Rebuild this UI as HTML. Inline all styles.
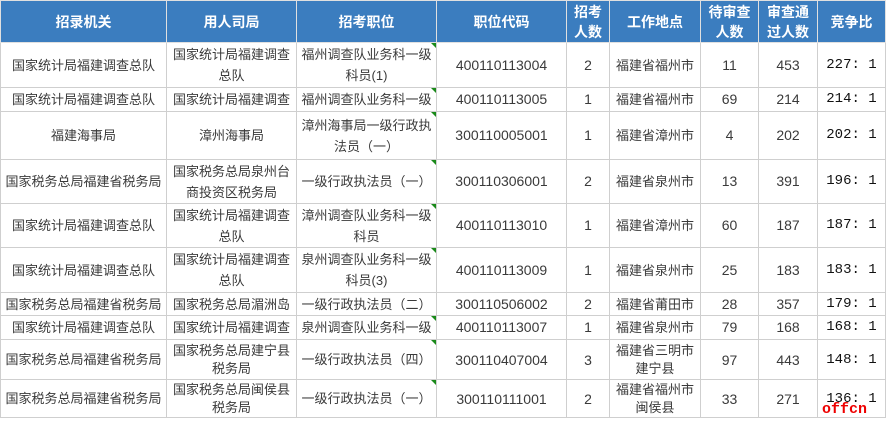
<!DOCTYPE html>
<html><head><meta charset="utf-8"><style>
body{margin:0;width:888px;height:421px;background:#fff;overflow:hidden;position:relative;font-family:"Liberation Sans","Noto Sans CJK SC",sans-serif}
table{border-collapse:collapse;table-layout:fixed;position:absolute;left:0;top:0;width:885px}
td,th{border:1px solid #cfcfcf;text-align:center;font-size:13px;color:#3a3a3a;line-height:21px;padding:0 2px;position:relative;overflow:hidden}
th{background:#3b7dbf;color:#fff;font-weight:bold;font-size:14px;line-height:20px;height:41px;border-color:#e0e0e0}
td.n{font-size:14px}
td.r{font-family:"Liberation Mono",monospace;font-size:14px;color:#111;white-space:nowrap}
tr.s td{line-height:18px}
.t:after{content:"";position:absolute;right:0;top:0;border-top:5px solid #1a8a1a;border-left:5px solid transparent}
.wm{position:absolute;left:822px;top:401px;color:#e00;font:bold 15px "Liberation Mono",monospace}
</style></head><body>
<table>
<colgroup><col style="width:166px"><col style="width:130px"><col style="width:140px"><col style="width:130px"><col style="width:43px"><col style="width:91px"><col style="width:58px"><col style="width:59px"><col style="width:68px"></colgroup>
<tr><th>招录机关</th><th>用人司局</th><th>招考职位</th><th>职位代码</th><th>招考<br>人数</th><th>工作地点</th><th>待审查<br>人数</th><th>审查通<br>过人数</th><th>竞争比</th></tr>
<tr style="height:45px"><td>国家统计局福建调查总队</td><td>国家统计局福建调查总队</td><td class="t">福州调查队业务科一级科员(1)</td><td class="n">400110113004</td><td class="n">2</td><td>福建省福州市</td><td class="n">11</td><td class="n">453</td><td class="r">227: 1</td></tr>
<tr style="height:24px"><td>国家统计局福建调查总队</td><td>国家统计局福建调查</td><td class="t">福州调查队业务科一级</td><td class="n">400110113005</td><td class="n">1</td><td>福建省福州市</td><td class="n">69</td><td class="n">214</td><td class="r">214: 1</td></tr>
<tr style="height:48px"><td>福建海事局</td><td>漳州海事局</td><td class="t">漳州海事局一级行政执法员（一）</td><td class="n">300110005001</td><td class="n">1</td><td>福建省漳州市</td><td class="n">4</td><td class="n">202</td><td class="r">202: 1</td></tr>
<tr style="height:44px"><td>国家税务总局福建省税务局</td><td>国家税务总局泉州台商投资区税务局</td><td class="t">一级行政执法员（一）</td><td class="n">300110306001</td><td class="n">2</td><td>福建省泉州市</td><td class="n">13</td><td class="n">391</td><td class="r">196: 1</td></tr>
<tr style="height:44px"><td>国家统计局福建调查总队</td><td>国家统计局福建调查总队</td><td class="t">漳州调查队业务科一级科员</td><td class="n">400110113010</td><td class="n">1</td><td>福建省漳州市</td><td class="n">60</td><td class="n">187</td><td class="r">187: 1</td></tr>
<tr style="height:45px"><td>国家统计局福建调查总队</td><td>国家统计局福建调查总队</td><td class="t">泉州调查队业务科一级科员(3)</td><td class="n">400110113009</td><td class="n">1</td><td>福建省泉州市</td><td class="n">25</td><td class="n">183</td><td class="r">183: 1</td></tr>
<tr style="height:23px"><td>国家税务总局福建省税务局</td><td>国家税务总局湄洲岛</td><td>一级行政执法员（二）</td><td class="n">300110506002</td><td class="n">2</td><td>福建省莆田市</td><td class="n">28</td><td class="n">357</td><td class="r">179: 1</td></tr>
<tr style="height:24px"><td>国家统计局福建调查总队</td><td>国家统计局福建调查</td><td class="t">泉州调查队业务科一级</td><td class="n">400110113007</td><td class="n">1</td><td>福建省泉州市</td><td class="n">79</td><td class="n">168</td><td class="r">168: 1</td></tr>
<tr class="s" style="height:40px"><td>国家税务总局福建省税务局</td><td>国家税务总局建宁县税务局</td><td class="t">一级行政执法员（四）</td><td class="n">300110407004</td><td class="n">3</td><td>福建省三明市建宁县</td><td class="n">97</td><td class="n">443</td><td class="r">148: 1</td></tr>
<tr class="s" style="height:38px"><td>国家税务总局福建省税务局</td><td>国家税务总局闽侯县税务局</td><td class="t">一级行政执法员（一）</td><td class="n">300110111001</td><td class="n">2</td><td>福建省福州市闽侯县</td><td class="n">33</td><td class="n">271</td><td class="r">136: 1</td></tr>
</table>
<div class="wm">offcn</div>
</body></html>
